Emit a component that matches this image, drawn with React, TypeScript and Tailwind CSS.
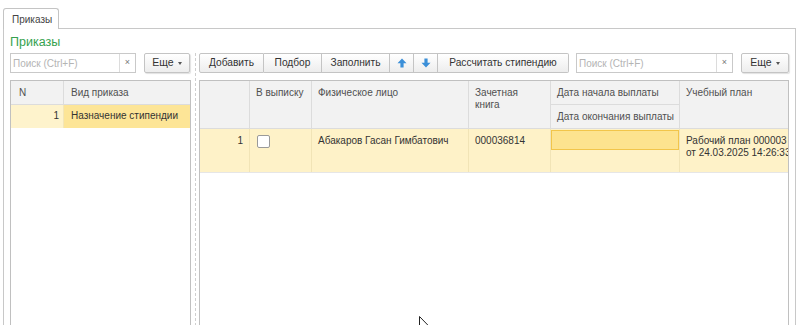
import React from "react";

function Arrow({ down }: { down?: boolean }) {
  return (
    <svg width="10" height="10" viewBox="0 0 10 10" style={{ transform: down ? "rotate(180deg)" : undefined }}>
      <path d="M5 0.5 L9.5 5.2 H6.6 V9.5 H3.4 V5.2 H0.5 Z" fill="#3b8fd8" />
    </svg>
  );
}

function Search({ w }: { w: string }) {
  return (
    <div className={`${w} h-[20px] flex border border-[#c9c9c9] bg-white`}>
      <div className="flex-1 flex items-center pl-[2px] text-[10px] text-[#b4b4b4]">Поиск (Ctrl+F)</div>
      <div className="w-[16px] border-l border-[#dcdcdc] flex items-center justify-center text-[9px] text-[#777]">×</div>
    </div>
  );
}

function More({ w }: { w: string }) {
  return (
    <div className={`${w} h-[20px] flex items-center justify-center gap-[4px] border border-[#c4c4c4] rounded-[2px] bg-gradient-to-b from-white to-[#ededed] shadow-[1px_1px_1px_rgba(0,0,0,0.12)] text-[10.5px] text-[#333]`}>
      <span>Еще</span>
      <span className="w-0 h-0 border-l-[2.5px] border-r-[2.5px] border-t-[3px] border-l-transparent border-r-transparent border-t-[#555]" />
    </div>
  );
}

const btn = "h-[20px] flex items-center justify-center border-y border-r border-[#c4c4c4] bg-gradient-to-b from-white to-[#ededed] text-[10.2px] text-[#333]";

export default function App() {
  return (
    <div className="w-[799px] h-[325px] bg-white overflow-hidden relative font-['Liberation_Sans',Arial,sans-serif] text-[10px] text-[#333]">
      {/* tab strip */}
      <div className="h-[28px] pl-[3px] flex items-end">
        <div className="relative z-10 -mb-px h-[21px] w-[56px] border border-b-0 border-[#c4c4c4] rounded-t-[3px] bg-white flex items-center pl-[8px] text-[10px] text-[#444]">
          Приказы
        </div>
      </div>
      {/* panel */}
      <div className="ml-[3px] w-[793px] h-[297px] border-x border-t border-[#c8c8c8] px-[6px]">
        <div className="h-[24px] pt-[5px] leading-[16px] text-[12.5px] text-[#35a24f]">Приказы</div>
        <div className="flex h-[273px]">
          {/* left column */}
          <div className="w-[181px] flex flex-col">
            <div className="h-[20px] flex">
              <Search w="w-[126px]" />
              <div className="w-[8px]" />
              <More w="w-[46px]" />
            </div>
            <div className="mt-[7px] flex-1 border border-[#c0c0c0] flex flex-col">
              <div className="h-[24px] flex bg-[#f2f2f2] border-b border-[#dcdcdc] text-[#505050]">
                <div className="w-[53px] border-r border-[#dcdcdc] pl-[8px] pt-[6px] leading-[12px]">N</div>
                <div className="flex-1 pl-[7px] pt-[6px] leading-[12px]">Вид приказа</div>
              </div>
              <div className="h-[23px] flex">
                <div className="w-[53px] bg-[#fef3cc] border-r border-[#f3e6b8] flex justify-end pr-[4px] pt-[5px] leading-[12px]">1</div>
                <div className="flex-1 bg-[#fde597] pl-[7px] pt-[5px] leading-[12px]">Назначение стипендии</div>
              </div>
              <div className="flex-1" />
            </div>
          </div>
          {/* splitter */}
          <div className="w-[8px] flex justify-center">
            <div className="w-0 h-full border-l border-dashed border-[#cfcfcf]" />
          </div>
          {/* right column */}
          <div className="w-[590px] flex flex-col">
            <div className="h-[20px] flex">
              <div className={`${btn} w-[65px] border-l rounded-l-[2px]`}>Добавить</div>
              <div className={`${btn} w-[58px]`}>Подбор</div>
              <div className={`${btn} w-[68px]`}>Заполнить</div>
              <div className={`${btn} w-[24px]`}><Arrow /></div>
              <div className={`${btn} w-[24px]`}><Arrow down /></div>
              <div className={`${btn} w-[131px] rounded-r-[2px]`}>Рассчитать стипендию</div>
              <div className="w-[7px]" />
              <Search w="w-[157px]" />
              <div className="w-[8px]" />
              <More w="w-[48px]" />
            </div>
            <div className="mt-[7px] flex-1 border border-[#c0c0c0] flex flex-col overflow-hidden">
              {/* header */}
              <div className="h-[48px] flex bg-[#f2f2f2] border-b border-[#dcdcdc] text-[#505050] leading-[12px] shrink-0">
                <div className="w-[50px] shrink-0 border-r border-[#dcdcdc]" />
                <div className="w-[62px] shrink-0 border-r border-[#dcdcdc] pl-[6px] pt-[6px]">В выписку</div>
                <div className="w-[157px] shrink-0 border-r border-[#dcdcdc] pl-[6px] pt-[6px]">Физическое лицо</div>
                <div className="w-[82px] shrink-0 border-r border-[#dcdcdc] pl-[6px] pt-[6px]">Зачетная<br />книга</div>
                <div className="w-[129px] shrink-0 border-r border-[#dcdcdc] flex flex-col">
                  <div className="h-[24px] border-b border-[#dcdcdc] pl-[6px] pt-[6px]">Дата начала выплаты</div>
                  <div className="flex-1 pl-[6px] pt-[6px]">Дата окончания выплаты</div>
                </div>
                <div className="flex-1 min-w-[120px] pl-[6px] pt-[6px] whitespace-nowrap">Учебный план</div>
              </div>
              {/* row */}
              <div className="h-[44px] flex bg-[#fef2c8] border-b border-[#e6e6e6] leading-[12px] shrink-0">
                <div className="w-[50px] shrink-0 border-r border-[#f1e4b6] flex justify-end pr-[6px] pt-[6px]">1</div>
                <div className="w-[62px] shrink-0 border-r border-[#f1e4b6] pl-[7px] pt-[6px]">
                  <div className="w-[13px] h-[13px] bg-white border border-[#9a9a9a] rounded-[2px]" />
                </div>
                <div className="w-[157px] shrink-0 border-r border-[#f1e4b6] pl-[6px] pt-[6px] whitespace-nowrap">Абакаров Гасан Гимбатович</div>
                <div className="w-[82px] shrink-0 border-r border-[#f1e4b6] pl-[6px] pt-[6px]">000036814</div>
                <div className="w-[129px] shrink-0 border-r border-[#f1e4b6] pt-px pl-0">
                  <div className="h-[20px] w-[128px] bg-[#fde38f] border border-[#f2c54a]" />
                </div>
                <div className="flex-1 min-w-[120px] pl-[6px] pt-[6px] whitespace-nowrap">
                  Рабочий план 000003<br />от 24.03.2025 14:26:33
                </div>
              </div>
              <div className="flex-1" />
            </div>
          </div>
        </div>
      </div>
      {/* mouse cursor */}
      <svg className="absolute left-[419px] top-[316px]" width="12" height="19" viewBox="0 0 12 19">
        <path d="M0.5 0.5 L0.5 15.5 L4 12 L6.5 18 L8.5 17 L6 11.3 L11 11.3 Z" fill="white" stroke="#222" strokeWidth="1" />
      </svg>
    </div>
  );
}
